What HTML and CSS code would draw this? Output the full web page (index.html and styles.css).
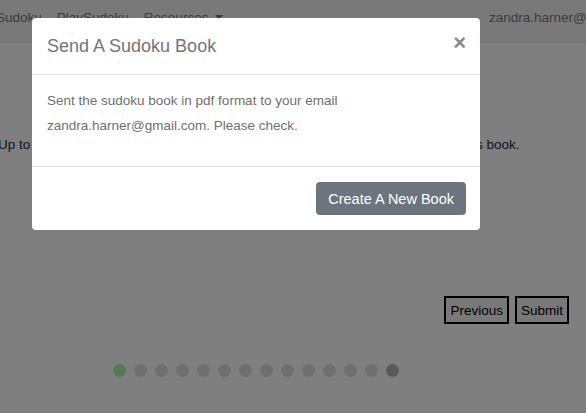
FILE: index.html
```
<!DOCTYPE html>
<html>
<head>
<meta charset="utf-8">
<link rel="stylesheet" href="styles.css">
</head>
<body>
<nav class="navbar">
  <a class="nav-link brand">Sudoku</a>
  <a class="nav-link">PlaySudoku</a>
  <a class="nav-link">Resources<span class="caret"></span></a>
  <span class="spacer"></span>
  <a class="nav-link user">zandra.harner@gmail.com</a>
</nav>
<main class="content">
  <p class="intro">Up to 20 puzzles per page, please pick the level and the number of pages for this book.</p>
  <div class="actions">
    <button class="btn-plain">Previous</button>
    <button class="btn-plain">Submit</button>
  </div>
  <div class="dots">
    <span class="dot active"></span>
    <span class="dot"></span>
    <span class="dot"></span>
    <span class="dot"></span>
    <span class="dot"></span>
    <span class="dot"></span>
    <span class="dot"></span>
    <span class="dot"></span>
    <span class="dot"></span>
    <span class="dot"></span>
    <span class="dot"></span>
    <span class="dot"></span>
    <span class="dot"></span>
    <span class="dot last"></span>
  </div>
</main>
<div class="backdrop"></div>
<div class="modal">
  <div class="modal-header">
    <h5 class="modal-title">Send A Sudoku Book</h5>
    <span class="close">&times;</span>
  </div>
  <div class="modal-body">
    <p>Sent the sudoku book in pdf format to your email<br>zandra.harner@gmail.com. Please check.</p>
  </div>
  <div class="modal-footer">
    <button class="btn-secondary">Create A New Book</button>
  </div>
</div>
</body>
</html>
```
FILE: styles.css
```
html, body {
  margin: 0;
  padding: 0;
  overflow: hidden;
  height: 100%;
}
body {
  font-family: "Liberation Sans", Arial, sans-serif;
  font-size: 13.5px;
  color: #212529;
  background: #fff;
}
.navbar {
  display: flex;
  align-items: center;
  height: 43px;
  padding-bottom: 7px;
  box-sizing: border-box;
  background: #f3f3f3;
  border-bottom: 1px solid #e6e6e6;
  white-space: nowrap;
}
.nav-link {
  color: #777;
  font-size: 13.5px;
  margin-right: 15px;
}
.brand { margin-left: -4px; }
.caret {
  display: inline-block;
  width: 0;
  height: 0;
  margin-left: 7px;
  vertical-align: 2px;
  border-left: 4px solid transparent;
  border-right: 4px solid transparent;
  border-top: 5px solid #777;
}
.spacer { flex: 1; }
.user {
  flex: none;
  width: 97px;
  overflow: hidden;
  margin-right: 0;
}
.content {
  padding-top: 92px;
}
.intro {
  margin: 0 0 0 -2px;
  white-space: nowrap;
  line-height: 20px;
  color: #1c2a3a;
}
.actions {
  display: flex;
  justify-content: flex-end;
  gap: 6px;
  padding-right: 17px;
  margin-top: 141px;
}
.btn-plain {
  font-family: "Liberation Sans", Arial, sans-serif;
  font-size: 13.5px;
  color: #000;
  background: #f2f2f2;
  border: 2px solid #000;
  height: 28px;
  padding: 0 4px;
  margin: 0;
}
.dots {
  display: flex;
  gap: 8px;
  margin-top: 40px;
  padding-left: 113px;
}
.dot {
  width: 13px;
  height: 13px;
  border-radius: 50%;
  background: #dfdfdf;
}
.dot.active { background: #aaf0aa; }
.dot.last { background: #b4b4b4; }
.backdrop {
  position: fixed;
  inset: 0;
  background: rgba(0, 0, 0, 0.5);
}
.modal {
  position: fixed;
  left: 32px;
  top: 18px;
  width: 448px;
  background: #fff;
  border-radius: 4px;
  display: flex;
  flex-direction: column;
}
.modal-header {
  display: flex;
  align-items: center;
  justify-content: space-between;
  height: 56px;
  padding: 0 15px;
  border-bottom: 1px solid #e0e0e0;
}
.modal-title {
  margin: 0;
  font-size: 18px;
  font-weight: normal;
  color: #757575;
}
.close {
  font-size: 22px;
  font-weight: bold;
  color: #8a8a8a;
  line-height: 1;
  margin-top: -6px;
  margin-right: -1px;
}
.modal-body {
  padding: 13px 15px 28px;
  border-bottom: 1px solid #e0e0e0;
}
.modal-body p {
  margin: 0;
  line-height: 25px;
  color: #6f6f6f;
  font-size: 13.5px;
}
.modal-footer {
  display: flex;
  justify-content: flex-end;
  padding: 15px 14px 15px;
}
.btn-secondary {
  font-family: "Liberation Sans", Arial, sans-serif;
  font-size: 14.5px;
  color: #fff;
  background: #6c757d;
  border: none;
  border-radius: 4px;
  height: 33px;
  padding: 0 12px;
}
```
